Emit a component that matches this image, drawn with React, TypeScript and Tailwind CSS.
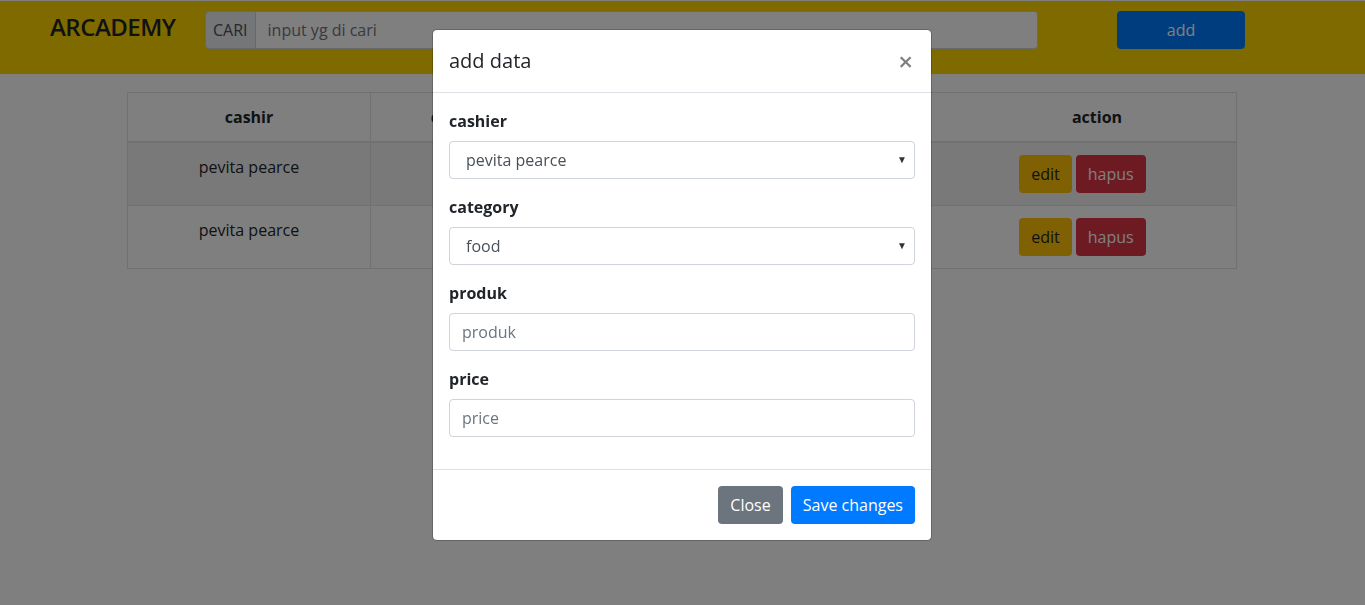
import { useState } from 'react';

const rows = [
  { cashier: 'pevita pearce', category: 'food', produk: 'nasi goreng', price: '15000' },
  { cashier: 'pevita pearce', category: 'food', produk: 'mie ayam', price: '12000' },
];

export default function App() {
  const [form, setForm] = useState({ cashier: 'pevita pearce', category: 'food', produk: '', price: '' });

  return (
    <div className="relative min-h-[605px] bg-white pt-[1px] font-['Open_Sans',sans-serif] text-base text-[#212529]">
      {/* navbar */}
      <nav className="h-[73px] bg-[#ffd500] pt-[10px]">
        <div className="flex items-start">
          <h4 className="ml-[50px] w-[155px] -mt-[2px] text-[24px] leading-[36px] font-semibold tracking-[-0.5px] text-[#212529]">ARCADEMY</h4>
          <div className="flex h-[38px] w-[833px]">
            <span className="flex items-center rounded-l-[4px] border border-[#ced4da] bg-[#e9ecef] px-[7px] text-[#495057]">CARI</span>
            <input
              className="flex-1 rounded-r-[4px] border border-l-0 border-[#ced4da] bg-white px-3 text-[#495057] outline-none placeholder:text-[#6c757d]"
              placeholder="input yg di cari"
            />
          </div>
          <button className="ml-[79px] h-[38px] w-[128px] rounded-[4px] bg-[#007bff] text-white">add</button>
        </div>
      </nav>

      {/* table */}
      <div className="px-[127px] pt-[18px]">
        <table className="w-[1110px] border-collapse text-center">
          <thead>
            <tr>
              <th className="w-[243px] border border-b-2 border-[#dee2e6] p-3 font-bold">cashir</th>
              <th className="w-[190px] border border-b-2 border-[#dee2e6] p-3 font-bold">category</th>
              <th className="w-[170px] border border-b-2 border-[#dee2e6] p-3 font-bold">produk</th>
              <th className="w-[160px] border border-b-2 border-[#dee2e6] p-3 font-bold">price</th>
              <th className="border border-b-2 border-[#dee2e6] py-3 pl-[79px] pr-3 font-bold">action</th>
            </tr>
          </thead>
          <tbody>
            {rows.map((r, i) => (
              <tr key={i} className={i % 2 === 0 ? 'bg-black/5' : ''}>
                <td className="border border-[#dee2e6] p-3 align-top">{r.cashier}</td>
                <td className="border border-[#dee2e6] p-3 align-top">{r.category}</td>
                <td className="border border-[#dee2e6] p-3 align-top">{r.produk}</td>
                <td className="border border-[#dee2e6] p-3 align-top">{r.price}</td>
                <td className="border border-[#dee2e6] py-3 pl-[50px] pr-3 align-top">
                  <div className="flex justify-center gap-1">
                    <button className="h-[38px] rounded-[4px] bg-[#ffc107] px-3 text-[#212529]">edit</button>
                    <button className="h-[38px] rounded-[4px] bg-[#dc3545] px-3 text-white">hapus</button>
                  </div>
                </td>
              </tr>
            ))}
          </tbody>
        </table>
      </div>

      {/* backdrop */}
      <div className="fixed inset-0 bg-black/50" />

      {/* modal */}
      <div className="absolute left-[432px] top-[29px] w-[500px] rounded-[5px] border border-black/20 bg-white bg-clip-padding">
        <div className="flex items-start justify-between border-b border-[#dee2e6] p-4">
          <h5 className="text-[20px] leading-[30px] font-medium">add data</h5>
          <button className="mr-[2px] text-[26px] leading-[30px] font-semibold text-black opacity-50">×</button>
        </div>
        <div className="p-4">
          <div className="mb-4">
            <label className="mb-2 block font-bold leading-6">cashier</label>
            <div className="relative">
              <select
                value={form.cashier}
                onChange={(e) => setForm({ ...form, cashier: e.target.value })}
                className="h-[38px] w-full appearance-none rounded-[4px] border border-[#ced4da] bg-white pl-4 text-[#495057] outline-none"
              >
                <option>pevita pearce</option>
              </select>
              <span className="pointer-events-none absolute right-[8px] top-[11px] text-[10px] text-[#333]">▼</span>
            </div>
          </div>
          <div className="mb-4">
            <label className="mb-2 block font-bold leading-6">category</label>
            <div className="relative">
              <select
                value={form.category}
                onChange={(e) => setForm({ ...form, category: e.target.value })}
                className="h-[38px] w-full appearance-none rounded-[4px] border border-[#ced4da] bg-white pl-4 text-[#495057] outline-none"
              >
                <option>food</option>
                <option>drink</option>
              </select>
              <span className="pointer-events-none absolute right-[8px] top-[11px] text-[10px] text-[#333]">▼</span>
            </div>
          </div>
          <div className="mb-4">
            <label className="mb-2 block font-bold leading-6">produk</label>
            <input
              value={form.produk}
              onChange={(e) => setForm({ ...form, produk: e.target.value })}
              placeholder="produk"
              className="h-[38px] w-full rounded-[4px] border border-[#ced4da] px-3 text-[#495057] outline-none placeholder:text-[#6c757d]"
            />
          </div>
          <div className="mb-4">
            <label className="mb-2 block font-bold leading-6">price</label>
            <input
              value={form.price}
              onChange={(e) => setForm({ ...form, price: e.target.value })}
              placeholder="price"
              className="h-[38px] w-full rounded-[4px] border border-[#ced4da] px-3 text-[#495057] outline-none placeholder:text-[#6c757d]"
            />
          </div>
        </div>
        <div className="flex justify-end gap-2 border-t border-[#dee2e6] p-4">
          <button className="h-[38px] rounded-[4px] bg-[#6c757d] px-3 text-white">Close</button>
          <button className="h-[38px] rounded-[4px] bg-[#007bff] px-3 text-white">Save changes</button>
        </div>
      </div>
    </div>
  );
}
